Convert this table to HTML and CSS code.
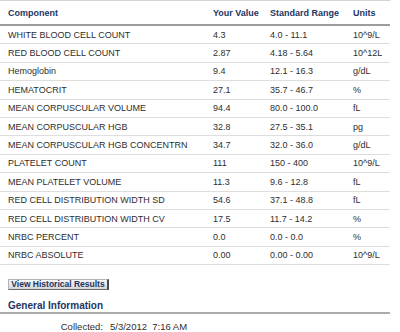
FILE: index.html
```html
<!DOCTYPE html>
<html>
<head>
<meta charset="utf-8">
<link rel="stylesheet" href="styles.css">
</head>
<body>
<div class="page">
  <table class="results">
    <colgroup>
      <col class="c-comp">
      <col class="c-val">
      <col class="c-range">
      <col class="c-unit">
    </colgroup>
    <thead>
      <tr>
        <th>Component</th>
        <th>Your Value</th>
        <th>Standard Range</th>
        <th>Units</th>
      </tr>
    </thead>
    <tbody>
      <tr><td>WHITE BLOOD CELL COUNT</td><td>4.3</td><td>4.0 - 11.1</td><td>10^9/L</td></tr>
      <tr><td>RED BLOOD CELL COUNT</td><td>2.87</td><td>4.18 - 5.64</td><td>10^12L</td></tr>
      <tr><td>Hemoglobin</td><td>9.4</td><td>12.1 - 16.3</td><td>g/dL</td></tr>
      <tr><td>HEMATOCRIT</td><td>27.1</td><td>35.7 - 46.7</td><td>%</td></tr>
      <tr><td>MEAN CORPUSCULAR VOLUME</td><td>94.4</td><td>80.0 - 100.0</td><td>fL</td></tr>
      <tr><td>MEAN CORPUSCULAR HGB</td><td>32.8</td><td>27.5 - 35.1</td><td>pg</td></tr>
      <tr><td>MEAN CORPUSCULAR HGB CONCENTRN</td><td>34.7</td><td>32.0 - 36.0</td><td>g/dL</td></tr>
      <tr><td>PLATELET COUNT</td><td>111</td><td>150 - 400</td><td>10^9/L</td></tr>
      <tr><td>MEAN PLATELET VOLUME</td><td>11.3</td><td>9.6 - 12.8</td><td>fL</td></tr>
      <tr><td>RED CELL DISTRIBUTION WIDTH SD</td><td>54.6</td><td>37.1 - 48.8</td><td>fL</td></tr>
      <tr><td>RED CELL DISTRIBUTION WIDTH CV</td><td>17.5</td><td>11.7 - 14.2</td><td>%</td></tr>
      <tr><td>NRBC PERCENT</td><td>0.0</td><td>0.0 - 0.0</td><td>%</td></tr>
      <tr><td>NRBC ABSOLUTE</td><td>0.00</td><td>0.00 - 0.00</td><td>10^9/L</td></tr>
    </tbody>
  </table>
  <div class="actions">
    <button class="hist-btn" type="button">View Historical Results</button>
  </div>
  <h2 class="section-title">General Information</h2>
  <div class="info-row">
    <span class="info-label">Collected:</span>
    <span class="info-value">5/3/2012&nbsp; 7:16 AM</span>
  </div>
</div>
</body>
</html>
```

FILE: styles.css
```css
html, body {
  margin: 0;
  padding: 0;
  background: #ffffff;
}

body {
  font-family: "Liberation Sans", Arial, Helvetica, sans-serif;
  color: #2e2e2e;
  font-size: 9px;
}

.page {
  width: 390px;
}

.results {
  width: 390px;
  border-collapse: collapse;
  table-layout: fixed;
}

.c-comp { width: 205px; }
.c-val { width: 57px; }
.c-range { width: 83px; }
.c-unit { width: 45px; }

.results th,
.results td {
  text-align: left;
  padding: 0 0 0 8px;
  white-space: nowrap;
  vertical-align: middle;
  overflow: hidden;
}

.results th {
  font-weight: bold;
  color: #1d3563;
  font-size: 9px;
  height: 22px;
  border-top: 1px solid #d4d4d4;
  border-bottom: 2px solid #9c9c9c;
  padding-top: 1px;
}

.results td {
  height: 17.4px;
  border-bottom: 1px solid #dedede;
  color: #2e2e2e;
}

.actions {
  padding: 14px 0 0 8px;
}

.hist-btn {
  display: block;
  margin: 0;
  height: 11px;
  width: 101px;
  padding: 0;
  font-family: "Liberation Sans", Arial, sans-serif;
  font-size: 8.5px;
  font-weight: bold;
  color: #1d3563;
  background: linear-gradient(#f6f6f6, #d6d6d6);
  border: 1px solid #b4b4b4;
  border-right: 2px solid #4a4a4a;
  border-bottom: 1px solid #6a6a6a;
  line-height: 9px;
}

.section-title {
  margin: 0;
  padding: 10px 0 0 8px;
  font-size: 10px;
  font-weight: bold;
  color: #1d3563;
  line-height: 12px;
  border-bottom: 2px solid #acacac;
}

.info-row {
  display: flex;
  gap: 7px;
  padding-top: 7px;
  font-size: 9.5px;
  color: #2e2e2e;
  line-height: 12px;
}

.info-label {
  width: 103px;
  text-align: right;
}
```
